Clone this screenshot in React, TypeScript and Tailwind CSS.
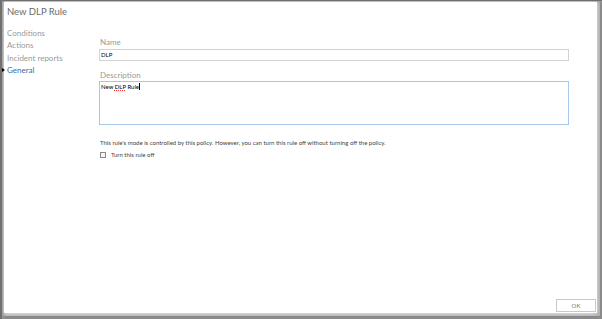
const navItems = ["Conditions", "Actions", "Incident reports"];

const App = () => {
  return (
    <div className="w-[602px] h-[319px] bg-white font-['Lato','Open_Sans',sans-serif] overflow-hidden pl-[4px] pt-[2px] pr-[5px] pb-[6px] shadow-[inset_2px_1px_0_#707070,inset_4px_2px_3px_#9a9a9a,inset_-2px_-3px_0_#8a8a8a,inset_-6px_-6px_5px_#b0b0b0]">
      <div className="relative w-full h-full bg-white flex flex-col">
        {/* TITLE */}
        <div className="pl-[3px] pt-[5px] text-[9.5px] text-[#6a6a6a] leading-none h-[25px]">
          New DLP Rule
        </div>

        <div className="flex flex-1">
          {/* NAV */}
          <div className="w-[95px] flex flex-col text-[8px] leading-[12.4px] text-[#9a9a9a]">
            {navItems.map((item) => (
              <div key={item} className="pl-[3px]">
                {item}
              </div>
            ))}
            <div className="relative pl-[3px] text-[#2f6fae]">
              <span className="absolute left-[-2px] top-[4px] w-0 h-0 border-y-[2px] border-y-transparent border-l-[3px] border-l-black"></span>
              General
            </div>
          </div>

          {/* FORM */}
          <div className="flex flex-col pt-[11px] w-[470px]">
            <div className="text-[8px] text-[#9a9a9a] leading-none pl-[1px]">Name</div>
            <div className="mt-[3px] h-[12px] border border-[#d2d2d2] text-[6px] leading-[10px] pl-[1px] text-black">
              DLP
            </div>
            <div className="mt-[10px] text-[8px] text-[#9a9a9a] leading-none pl-[1px]">Description</div>
            <div className="mt-[2px] h-[44px] w-[470px] border border-[#a9c7ea] text-[6px] leading-[9px] pl-[1px] text-black">
              New{" "}
              <span className="underline decoration-dotted decoration-red-500 underline-offset-[1px]">DLP</span>{" "}
              Rule<span className="border-r border-black"></span>
            </div>
            <div className="mt-[15px] text-[6px] text-[#444] leading-none pl-[1px]">
              This rule's mode is controlled by this policy. However, you can turn this rule off without turning off the policy.
            </div>
            <div className="mt-[6px] flex items-center gap-[5px] pl-[1px]">
              <span className="w-[6px] h-[6px] border border-[#8a8a8a] bg-[#f4f4f4]"></span>
              <span className="text-[6px] text-[#444] leading-none">Turn this rule off</span>
            </div>
          </div>
        </div>

        {/* FOOTER */}
        <div className="flex justify-end pr-[1px] pb-[1px]">
          <button className="w-[40px] h-[13px] border border-[#c8c8c8] bg-white text-[6px] text-[#777] leading-none">
            OK
          </button>
        </div>
      </div>
    </div>
  );
};

export default App;
